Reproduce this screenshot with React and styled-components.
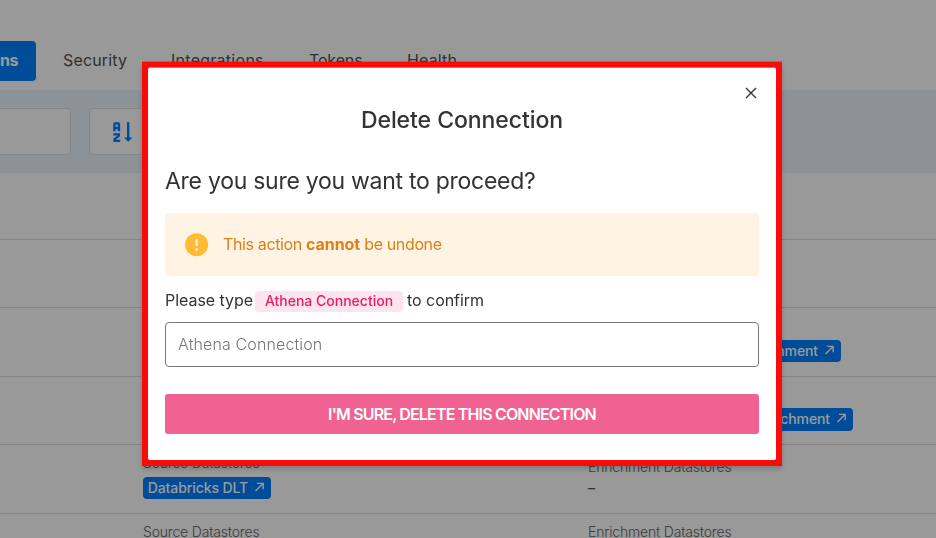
import React from 'react';
import styled, { createGlobalStyle } from 'styled-components';

const GlobalStyle = createGlobalStyle`
  * { box-sizing: border-box; }
  body { margin: 0; overflow: hidden; background: #fff; font-family: Inter, "Open Sans", sans-serif; color: #333; }
`;

const Page = styled.div`
  height: 538px;
  overflow: hidden;
  background: #fff;
`;

const Tabs = styled.nav`
  display: flex;
  align-items: flex-start;
  height: 90px;
  padding-top: 41px;
`;

const Tab = styled.div`
  width: ${(p) => p.$width}px;
  padding-left: 27px;
  font-size: 16px;
  line-height: 38px;
  font-weight: 400;
  color: #505050;
  letter-spacing: ${(p) => p.$spacing || 0}px;
  white-space: nowrap;
`;

const ActiveTab = styled(Tab)`
  height: 40px;
  padding: 0 18px 0 0;
  border-radius: 0 4px 4px 0;
  background: #007fff;
  color: #fff;
  font-weight: 700;
  text-align: right;
`;

const FilterBar = styled.div`
  display: flex;
  gap: 18px;
  height: 83px;
  padding-top: 18px;
  background: #ebf4fb;
`;

const FilterBox = styled.div`
  display: flex;
  align-items: center;
  width: ${(p) => p.$width}px;
  height: 47px;
  padding-left: 20px;
  border: 1px solid #dcdfe1;
  border-left-width: ${(p) => (p.$cut ? 0 : 1)}px;
  border-radius: ${(p) => (p.$cut ? '0 5px 5px 0' : '5px')};
  background: #fff;
`;

const Rows = styled.div`
  display: grid;
  grid-template-rows: 67px 68px 69px 68px 69px 68px;
`;

const Row = styled.div`
  display: grid;
  grid-template-columns: 445px 1fr;
  padding-left: 143px;
  border-bottom: 1px solid #dbdbdb;
`;

const Cell = styled.div`
  display: flex;
  flex-direction: column;
  align-items: flex-start;
  gap: 8px;
  padding-top: ${(p) => p.$top || 12}px;
`;

const Label = styled.div`
  font-size: 14px;
  line-height: 12px;
  font-weight: 300;
  letter-spacing: -0.18px;
  color: #666;
  white-space: nowrap;
`;

const Dash = styled.div`
  font-size: 14px;
  line-height: 14px;
  font-weight: 500;
  color: #555;
`;

const Chip = styled.div`
  display: flex;
  align-items: flex-start;
  justify-content: flex-end;
  gap: 6px;
  width: ${(p) => p.$width}px;
  height: ${(p) => p.$height || 22}px;
  padding-right: 6px;
  border-radius: 4px;
  background: #007fff;
  color: #fff;
  font-size: 14px;
  line-height: 22px;
  font-weight: 500;
  letter-spacing: -0.1px;
  white-space: nowrap;

  svg { margin-top: 5px; }
`;

const Overlay = styled.div`
  position: fixed;
  inset: 0;
  display: flex;
  align-items: flex-start;
  padding: 62px 0 0 142px;
  background: rgba(0, 0, 0, 0.4);
`;

const Frame = styled.div`
  width: 640px;
  height: 404px;
  padding: 6px;
  background: #f90b08;
  box-shadow: 0 -1px 0 rgba(249, 11, 8, 0.4), 0 3px 5px rgba(0, 0, 0, 0.2);
`;

const Dialog = styled.section`
  display: flex;
  flex-direction: column;
  height: 392px;
  padding: 15px 17px 0;
  border-radius: 2px;
  background: #fff;
  box-shadow: 0 -1px 0 rgba(255, 255, 255, 0.4);
`;

const CloseButton = styled.button`
  display: flex;
  align-self: flex-end;
  width: 20px;
  height: 20px;
  margin-right: -2px;
  padding: 0;
  border: 0;
  background: none;
`;

const Title = styled.h1`
  margin: 0;
  font-size: 23px;
  line-height: 34px;
  font-weight: 500;
  letter-spacing: -0.06px;
  text-align: center;
`;

const Question = styled.h2`
  margin: 27px 0 0;
  font-size: 23px;
  line-height: 34px;
  font-weight: 400;
  letter-spacing: -0.27px;
`;

const Warning = styled.div`
  display: flex;
  align-items: center;
  gap: 14px;
  height: 63px;
  margin-top: 15px;
  padding-left: 20px;
  border-radius: 4px;
  background: #fff4e3;
  color: #dd8015;
  font-size: 16px;
  font-weight: 400;
  letter-spacing: -0.36px;

  span { padding-bottom: 2px; }
  b { font-weight: 700; letter-spacing: -0.08px; }
`;

const Prompt = styled.label`
  display: flex;
  height: 22px;
  margin-top: 14px;
  font-size: 16px;
  line-height: 20px;
  font-weight: 400;
  letter-spacing: -0.04px;
  white-space: nowrap;
`;

const Name = styled.span`
  width: 148px;
  height: 21px;
  margin: 1px 4px 0 3px;
  border-radius: 4px;
  background: #fde4ee;
  color: #ea1b62;
  font-size: 14px;
  font-weight: 500;
  line-height: 20px;
  letter-spacing: 0;
  text-align: center;
`;

const PromptText = styled.span`
  width: ${(p) => p.$width || 'auto'};
`;

const Input = styled.input`
  width: 594px;
  height: 45px;
  margin-top: 10px;
  padding: 0 12px 2px;
  border: 1px solid #777;
  border-radius: 4px;
  background: #fff;
  font: 300 16px Inter, "Open Sans", sans-serif;
  letter-spacing: 0.12px;

  &::placeholder { color: #777; opacity: 1; }
`;

const ConfirmButton = styled.button`
  height: 40px;
  flex: none;
  margin-top: 27px;
  padding: 0;
  border: 0;
  border-radius: 3px;
  background: #f06292;
  color: #fff;
  font: 600 16px Inter, "Open Sans", sans-serif;
  letter-spacing: -0.83px;
`;

const SortIcon = () => (
  <svg width="26" height="26" viewBox="0 0 26 26" fill="none" stroke="#007fff">
    <path d="M4.4 12.3V4.9L5 4.3H8.4L9 4.9V12.3M4.4 9H9M3.3 15.4H8.9V16.8L4.5 20.4V21.8H10.2" strokeWidth="2.3" />
    <path d="M18.2 3.2V20" strokeWidth="2.4" />
    <path d="M14 18.4H22.4L18.2 22.8Z" fill="#007fff" stroke="none" />
  </svg>
);

const ArrowIcon = () => (
  <svg width="11" height="11" viewBox="0 0 11 11" fill="none" stroke="#fff" strokeWidth="1.4">
    <path d="M1.5 9L8.8 1.7M3 1.4H9.2V7.2" />
  </svg>
);

const AlertIcon = () => (
  <svg width="24" height="24" viewBox="0 0 24 24">
    <circle cx="11.6" cy="11.7" r="11.5" fill="#ffbb33" />
    <path d="M11.6 6V13M11.6 15.3V17.7" stroke="#fff4e3" strokeWidth="2.3" />
  </svg>
);

const CloseIcon = () => (
  <svg width="20" height="20" viewBox="0 0 20 20" fill="none" stroke="#333" strokeWidth="1.4">
    <path d="M5 5L15 15M15 5L5 15" />
  </svg>
);

const DatastoreChip = ({ width, height, children }) => (
  <Chip $width={width} $height={height}>
    {children}
    <ArrowIcon />
  </Chip>
);

export default function App() {
  return (
    <>
      <GlobalStyle />
      <Page>
        <Tabs>
          <ActiveTab $width={36} $spacing={-0.4}>ns</ActiveTab>
          <Tab $width={108} $spacing={0.15}>Security</Tab>
          <Tab $width={138} $spacing={0.27}>Integrations</Tab>
          <Tab $width={98} $spacing={-0.15}>Tokens</Tab>
          <Tab $width={100} $spacing={0.15}>Health</Tab>
        </Tabs>
        <FilterBar>
          <FilterBox $width={71} $cut />
          <FilterBox $width={180}><SortIcon /></FilterBox>
        </FilterBar>
        <Rows>
          <Row />
          <Row />
          <Row>
            <Cell />
            <Cell>
              <Label>Enrichment Datastores</Label>
              <DatastoreChip width={253}>Enrichment</DatastoreChip>
            </Cell>
          </Row>
          <Row>
            <Cell />
            <Cell $top={11}>
              <Label>Enrichment Datastores</Label>
              <DatastoreChip width={265} height={23}>Enrichment</DatastoreChip>
            </Cell>
          </Row>
          <Row>
            <Cell>
              <Label>Source Datastores</Label>
              <DatastoreChip width={128}>Databricks DLT</DatastoreChip>
            </Cell>
            <Cell $top={16}>
              <Label>Enrichment Datastores</Label>
              <Dash>–</Dash>
            </Cell>
          </Row>
          <Row>
            <Cell><Label>Source Datastores</Label></Cell>
            <Cell><Label>Enrichment Datastores</Label></Cell>
          </Row>
        </Rows>
      </Page>
      <Overlay>
        <Frame>
          <Dialog role="dialog">
            <CloseButton aria-label="Close"><CloseIcon /></CloseButton>
            <Title>Delete Connection</Title>
            <Question>Are you sure you want to proceed?</Question>
            <Warning>
              <AlertIcon />
              <span>This action <b>cannot</b> be undone</span>
            </Warning>
            <Prompt>
              <PromptText $width="87px">Please type</PromptText>
              <Name>Athena Connection</Name>
              <PromptText>to confirm</PromptText>
            </Prompt>
            <Input placeholder="Athena Connection" />
            <ConfirmButton>I'M SURE, DELETE THIS CONNECTION</ConfirmButton>
          </Dialog>
        </Frame>
      </Overlay>
    </>
  );
}
